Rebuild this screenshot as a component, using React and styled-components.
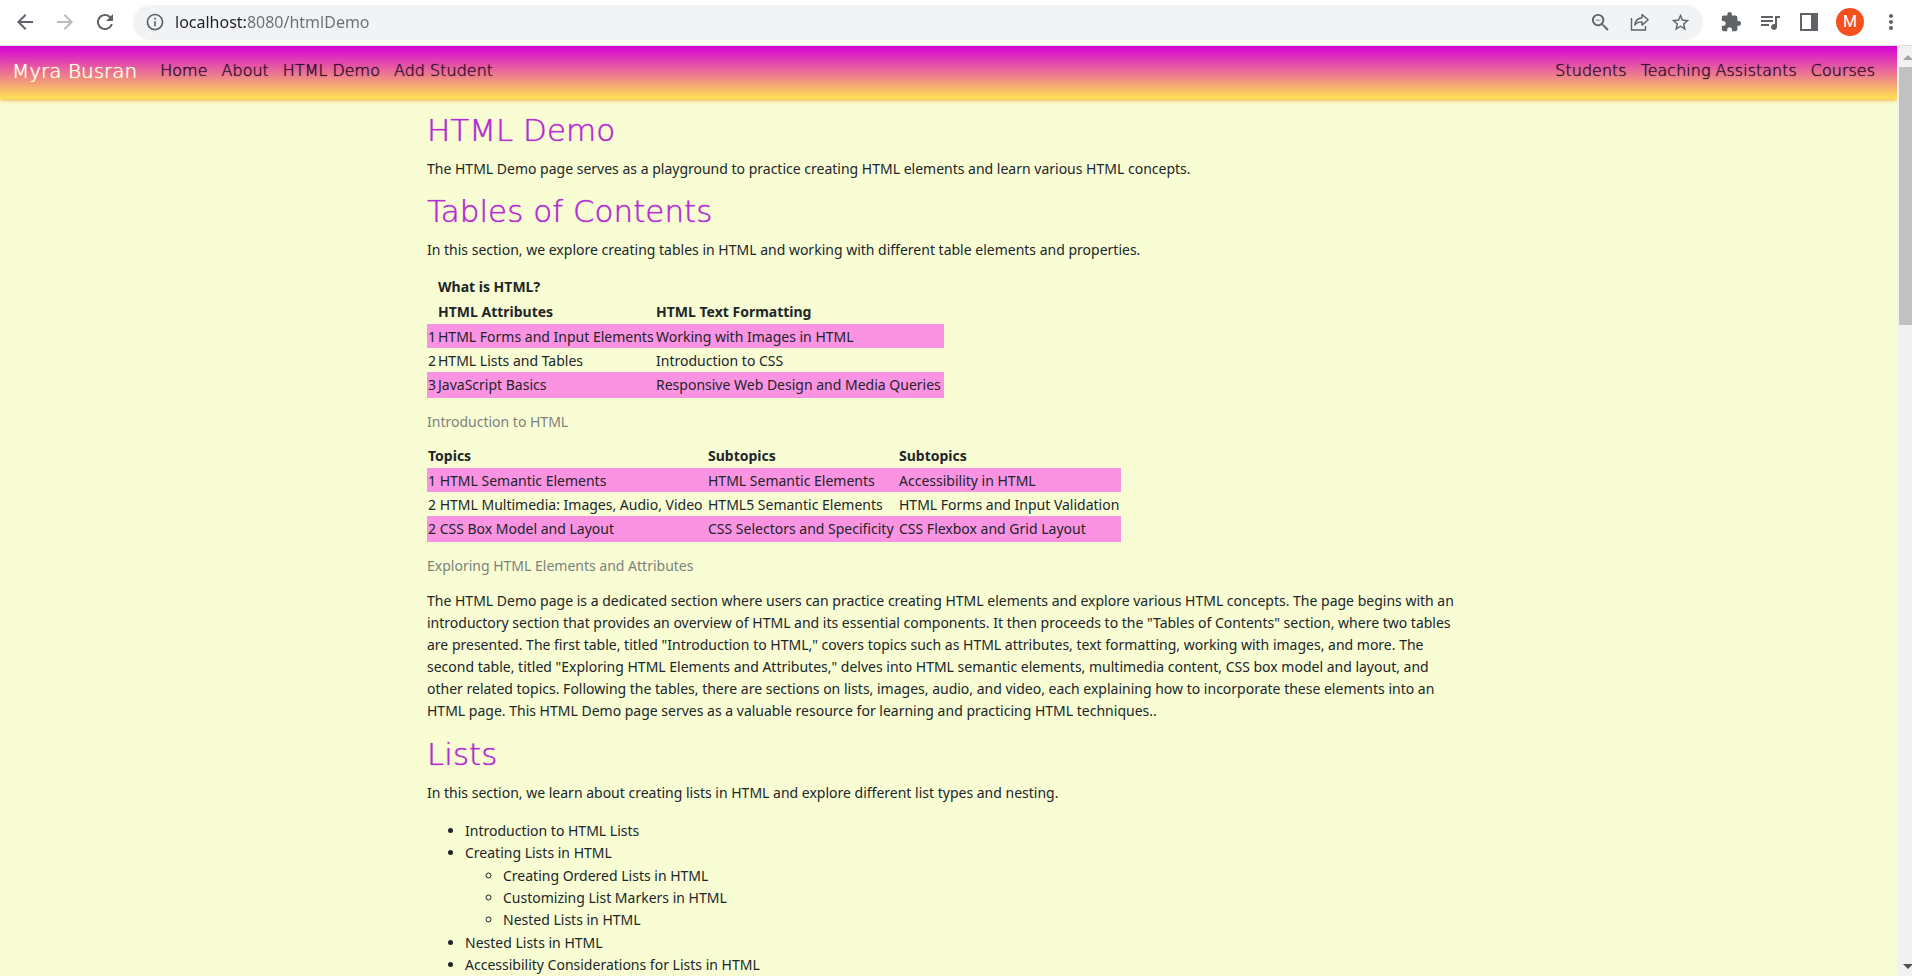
import React from 'react';
import styled, { createGlobalStyle } from 'styled-components';
import {
  MdArrowBack,
  MdArrowForward,
  MdRefresh,
  MdInfoOutline,
  MdZoomOut,
  MdStarBorder,
  MdExtension,
  MdQueueMusic,
  MdMoreVert,
} from 'react-icons/md';

const GlobalStyle = createGlobalStyle`
  *, *::before, *::after { box-sizing: border-box; }
  body {
    margin: 0;
    overflow: hidden;
    font-family: "Noto Sans", "Open Sans", sans-serif;
    font-size: 14px;
    line-height: 22px;
    color: #212529;
    background: #f8fdd4;
  }
`;

const rounded = '"DejaVu Sans", sans-serif';

const Window = styled.div`
  display: flex;
  flex-direction: column;
  height: 100vh;
`;

const Toolbar = styled.header`
  display: flex;
  flex: none;
  align-items: center;
  height: 46px;
  padding: 0 9px 1px 13px;
  background: #fff;
  border-bottom: 1px solid #dcdcdc;
`;

const ToolGroup = styled.div`
  display: flex;
  align-items: center;
  gap: ${(p) => p.$gap}px;
`;

const ToolButton = styled.button`
  display: flex;
  align-items: center;
  justify-content: center;
  flex: none;
  width: 24px;
  height: 24px;
  padding: 0;
  border: 0;
  background: none;
  color: ${(p) => (p.$muted ? '#babcbe' : '#5f6368')};
`;

const AddressBar = styled.div`
  display: flex;
  flex: 1;
  align-items: center;
  height: 35px;
  margin: 0 16px 0 16px;
  padding: 0 11px 0 10px;
  border-radius: 18px;
  background: #f1f3f4;
`;

const AddressInput = styled.input`
  flex: 1;
  min-width: 0;
  height: 28px;
  margin-left: 8px;
  padding: 0;
  border: 0;
  outline: 0;
  font: 16px/28px "Noto Sans", sans-serif;
  color: #6b6f73;
  background: linear-gradient(90deg, #202124 71px, #6b6f73 71px);
  background-clip: text;
  -webkit-text-fill-color: transparent;
`;

const Avatar = styled.button`
  width: 28px;
  height: 28px;
  padding: 0;
  border: 0;
  border-radius: 50%;
  background: #f4511e;
  color: #fff;
  font: 16px/28px Roboto, sans-serif;
`;

const Viewport = styled.div`
  display: flex;
  flex: 1;
  min-height: 0;
`;

const Page = styled.div`
  flex: 1;
  min-width: 0;
  overflow: hidden;
  background: #f8fdd4;
`;

const Navbar = styled.nav`
  display: flex;
  align-items: center;
  height: 53px;
  padding: 0 22px 3px 12px;
  background: linear-gradient(#d600d6, #ffe352);
  box-shadow: 0 1px 4px #f5a52a;
  font-family: ${rounded};
  font-weight: 200;
`;

const Brand = styled.a`
  margin-right: 23px;
  color: #fff;
  font-size: 20px;
  line-height: 28px;
  text-decoration: none;
  text-shadow: 0 0 1px #fff, 0 1px 2px #f5a52a;
`;

const NavLinks = styled.div`
  display: flex;
  gap: 14px;
  margin-left: ${(p) => (p.$end ? 'auto' : '0')};
`;

const NavLink = styled.a`
  color: #2b0a2b;
  font-size: 16px;
  line-height: 24px;
  text-decoration: none;
  text-shadow: 0 0 1px #2b0a2b;
`;

const Main = styled.main`
  max-width: 1043px;
  margin: 0 auto;
  padding: 13px 6px 0 0;
`;

const Heading = styled.h2`
  margin: 0 0 10px;
  color: #b52cd0;
  font-family: ${rounded};
  font-size: 31px;
  font-weight: 200;
  line-height: 36px;
  text-shadow: 0 0 1px #b52cd0;
`;

const Text = styled.p`
  margin: 0 0 13px;
`;

const Summary = styled(Text)`
  margin: 13px 0 14px;
`;

const Table = styled.table`
  width: ${(p) => p.$width}px;
  margin: 0 0 10px;
  border-collapse: collapse;
  table-layout: fixed;
  white-space: nowrap;
`;

const Caption = styled.caption`
  caption-side: bottom;
  padding-top: 13px;
  text-align: left;
  color: #7c827c;
`;

const Col = styled.col`
  width: ${(p) => p.$width}px;
`;

const HeadCell = styled.th`
  height: 25px;
  padding: 1px;
  text-align: left;
  font-weight: 700;
`;

const Cell = styled.td`
  height: 24px;
  padding: 2px 1px 0;
`;

const Row = styled.tr`
  background: ${(p) => (p.$striped ? '#fb93e3' : 'transparent')};

  &:last-child ${Cell} {
    height: 26px;
    padding-bottom: 2px;
  }
`;

const List = styled.ul`
  margin: 16px 0;
  padding-left: 38px;
`;

const SubList = styled.ul`
  margin: 1px 0;
  padding-left: 38px;
`;

const ScrollTrack = styled.div`
  display: flex;
  flex: none;
  flex-direction: column;
  align-items: flex-end;
  width: 15px;
  background: #f1f1f1;
`;

const ScrollThumb = styled.div`
  width: 13px;
  height: 258px;
  margin-bottom: auto;
  background: #c1c1c1;
`;

const ScrollArrow = styled.svg`
  display: block;
  flex: none;
  width: 13px;
  height: 21px;
`;

const ShareIcon = () => (
  <svg width="20" height="20" viewBox="0 0 20 20" fill="none" stroke="#5f6368" strokeWidth="1.4">
    <path d="M1.500 6v12h14v-4" />
    <path d="M12 2.500l6.200 5.300-6.200 5.300v-3.200c-3.600 0-5.600.9-7.200 3.100.5-4 2.600-6.800 7.200-7.300z" strokeLinejoin="round" />
  </svg>
);

const PanelIcon = () => (
  <svg width="18" height="18" viewBox="0 0 18 18">
    <path fill="#5f6368" fillRule="evenodd" d="M0 0h18v18H0zM2 2v14h9V2z" />
  </svg>
);

const topics = [
  ['1', 'HTML Forms and Input Elements', 'Working with Images in HTML'],
  ['2', 'HTML Lists and Tables', 'Introduction to CSS'],
  ['3', 'JavaScript Basics', 'Responsive Web Design and Media Queries'],
];

const subtopics = [
  ['1 HTML Semantic Elements', 'HTML Semantic Elements', 'Accessibility in HTML'],
  ['2 HTML Multimedia: Images, Audio, Video', 'HTML5 Semantic Elements', 'HTML Forms and Input Validation'],
  ['2 CSS Box Model and Layout', 'CSS Selectors and Specificity', 'CSS Flexbox and Grid Layout'],
];

const Rows = ({ data }) =>
  data.map((cells, i) => (
    <Row key={i} $striped={i % 2 === 0}>
      {cells.map((cell, j) => (
        <Cell key={j}>{cell}</Cell>
      ))}
    </Row>
  ));

export default function App() {
  return (
    <Window>
      <GlobalStyle />
      <Toolbar>
        <ToolGroup $gap={16}>
          <ToolButton aria-label="Back"><MdArrowBack size={24} /></ToolButton>
          <ToolButton aria-label="Forward" $muted><MdArrowForward size={24} /></ToolButton>
          <ToolButton aria-label="Reload"><MdRefresh size={26} /></ToolButton>
        </ToolGroup>
        <AddressBar>
          <ToolButton aria-label="Site information"><MdInfoOutline size={20} /></ToolButton>
          <AddressInput aria-label="Address" defaultValue="localhost:8080/htmlDemo" />
          <ToolGroup $gap={16}>
            <ToolButton aria-label="Zoom"><MdZoomOut size={23} /></ToolButton>
            <ToolButton aria-label="Share"><ShareIcon /></ToolButton>
            <ToolButton aria-label="Bookmark"><MdStarBorder size={21} /></ToolButton>
          </ToolGroup>
        </AddressBar>
        <ToolGroup $gap={15}>
          <ToolButton aria-label="Extensions"><MdExtension size={22} /></ToolButton>
          <ToolButton aria-label="Media"><MdQueueMusic size={24} /></ToolButton>
          <ToolButton aria-label="Side panel"><PanelIcon /></ToolButton>
          <Avatar>M</Avatar>
          <ToolButton aria-label="Menu"><MdMoreVert size={24} /></ToolButton>
        </ToolGroup>
      </Toolbar>
      <Viewport>
        <Page>
          <Navbar>
            <Brand href="#">Myra Busran</Brand>
            <NavLinks>
              <NavLink href="#">Home</NavLink>
              <NavLink href="#">About</NavLink>
              <NavLink href="#">HTML Demo</NavLink>
              <NavLink href="#">Add Student</NavLink>
            </NavLinks>
            <NavLinks $end>
              <NavLink href="#">Students</NavLink>
              <NavLink href="#">Teaching Assistants</NavLink>
              <NavLink href="#">Courses</NavLink>
            </NavLinks>
          </Navbar>
          <Main>
            <Heading>HTML Demo</Heading>
            <Text>The HTML Demo page serves as a playground to practice creating HTML elements and learn various HTML concepts.</Text>
            <Heading>Tables of Contents</Heading>
            <Text>In this section, we explore creating tables in HTML and working with different table elements and properties.</Text>
            <Table $width={517}>
              <Caption>Introduction to HTML</Caption>
              <colgroup>
                <Col $width={10} />
                <Col $width={218} />
                <Col $width={289} />
              </colgroup>
              <thead>
                <Row>
                  <HeadCell />
                  <HeadCell colSpan={2}>What is HTML?</HeadCell>
                </Row>
                <Row>
                  <HeadCell />
                  <HeadCell>HTML Attributes</HeadCell>
                  <HeadCell>HTML Text Formatting</HeadCell>
                </Row>
              </thead>
              <tbody>
                <Rows data={topics} />
              </tbody>
            </Table>
            <Table $width={694}>
              <Caption>Exploring HTML Elements and Attributes</Caption>
              <colgroup>
                <Col $width={280} />
                <Col $width={191} />
                <Col $width={223} />
              </colgroup>
              <thead>
                <Row>
                  <HeadCell>Topics</HeadCell>
                  <HeadCell>Subtopics</HeadCell>
                  <HeadCell>Subtopics</HeadCell>
                </Row>
              </thead>
              <tbody>
                <Rows data={subtopics} />
              </tbody>
            </Table>
            <Summary>
              The HTML Demo page is a dedicated section where users can practice creating HTML elements and explore
              various HTML concepts. The page begins with an introductory section that provides an overview of HTML and
              its essential components. It then proceeds to the "Tables of Contents" section, where two tables are
              presented. The first table, titled "Introduction to HTML," covers topics such as HTML attributes, text
              formatting, working with images, and more. The second table, titled "Exploring HTML Elements and
              Attributes," delves into HTML semantic elements, multimedia content, CSS box model and layout, and other
              related topics. Following the tables, there are sections on lists, images, audio, and video, each
              explaining how to incorporate these elements into an HTML page. This HTML Demo page serves as a valuable
              resource for learning and practicing HTML techniques..
            </Summary>
            <Heading>Lists</Heading>
            <Text>In this section, we learn about creating lists in HTML and explore different list types and nesting.</Text>
            <List>
              <li>Introduction to HTML Lists</li>
              <li>
                Creating Lists in HTML
                <SubList>
                  <li>Creating Ordered Lists in HTML</li>
                  <li>Customizing List Markers in HTML</li>
                  <li>Nested Lists in HTML</li>
                </SubList>
              </li>
              <li>Nested Lists in HTML</li>
              <li>Accessibility Considerations for Lists in HTML</li>
            </List>
          </Main>
        </Page>
        <ScrollTrack>
          <ScrollArrow viewBox="0 0 13 21"><path fill="#a3a3a3" d="M4 14l5-5 4 4v1z" /></ScrollArrow>
          <ScrollThumb />
          <ScrollArrow viewBox="0 0 13 21"><path fill="#505050" d="M4 9h9v1l-4 4z" /></ScrollArrow>
        </ScrollTrack>
      </Viewport>
    </Window>
  );
}
